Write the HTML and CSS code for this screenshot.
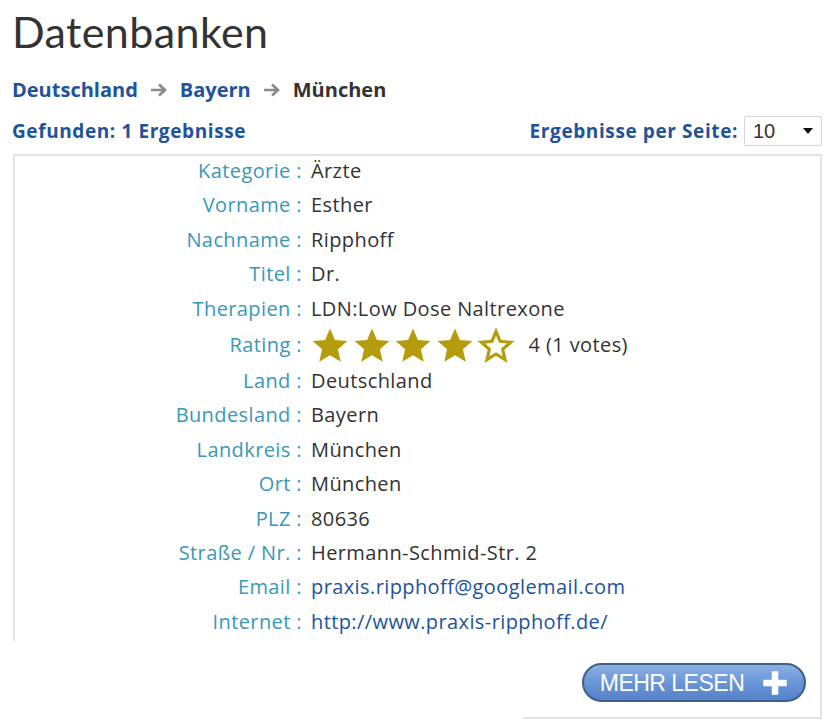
FILE: index.html
```html
<!DOCTYPE html>
<html lang="de">
<head>
<meta charset="utf-8">
<title>Datenbanken</title>
<link rel="stylesheet" href="styles.css">
</head>
<body>
<div class="page">
  <h1 class="title">Datenbanken</h1>
  <div class="crumbs">
    <a class="crumb" href="#">Deutschland</a>
    <svg class="arrow" viewBox="0 0 20 16"><path d="M2 8h14M10 2.5L16 8l-6 5.5"/></svg>
    <a class="crumb" href="#">Bayern</a>
    <svg class="arrow" viewBox="0 0 20 16"><path d="M2 8h14M10 2.5L16 8l-6 5.5"/></svg>
    <span class="crumb current">München</span>
  </div>
  <div class="toolbar">
    <span class="found">Gefunden: 1 Ergebnisse</span>
    <div class="perpage">
      <span>Ergebnisse per Seite:</span>
      <div class="select"><span>10</span><span class="caret"></span></div>
    </div>
  </div>
  <div class="box">
    <div class="rows">
      <div class="lbl">Kategorie :</div><div class="val">Ärzte</div>
      <div class="lbl">Vorname :</div><div class="val">Esther</div>
      <div class="lbl">Nachname :</div><div class="val">Ripphoff</div>
      <div class="lbl">Titel :</div><div class="val">Dr.</div>
      <div class="lbl">Therapien :</div><div class="val">LDN:Low Dose Naltrexone</div>
      <div class="lbl rating-lbl">Rating :</div>
      <div class="val rating">
        <svg class="star" viewBox="0 0 24 24"><path d="M12 1.5l3.1 7.3 7.9.7-6 5.2 1.8 7.8L12 18.4l-6.8 4.1L7 14.7 1 9.5l7.9-.7z"/></svg>
        <svg class="star" viewBox="0 0 24 24"><path d="M12 1.5l3.1 7.3 7.9.7-6 5.2 1.8 7.8L12 18.4l-6.8 4.1L7 14.7 1 9.5l7.9-.7z"/></svg>
        <svg class="star" viewBox="0 0 24 24"><path d="M12 1.5l3.1 7.3 7.9.7-6 5.2 1.8 7.8L12 18.4l-6.8 4.1L7 14.7 1 9.5l7.9-.7z"/></svg>
        <svg class="star" viewBox="0 0 24 24"><path d="M12 1.5l3.1 7.3 7.9.7-6 5.2 1.8 7.8L12 18.4l-6.8 4.1L7 14.7 1 9.5l7.9-.7z"/></svg>
        <svg class="star empty" viewBox="0 0 24 24"><path d="M12 3.5l2.6 6.2 6.6.6-5 4.4 1.5 6.5L12 17.7l-5.7 3.5 1.5-6.5-5-4.4 6.6-.6z"/></svg>
        <span class="votes">4 (1 votes)</span>
      </div>
      <div class="lbl">Land :</div><div class="val">Deutschland</div>
      <div class="lbl">Bundesland :</div><div class="val">Bayern</div>
      <div class="lbl">Landkreis :</div><div class="val">München</div>
      <div class="lbl">Ort :</div><div class="val">München</div>
      <div class="lbl">PLZ :</div><div class="val">80636</div>
      <div class="lbl">Straße / Nr. :</div><div class="val">Hermann-Schmid-Str. 2</div>
      <div class="lbl">Email :</div><div class="val"><a class="link" href="#">praxis.ripphoff@googlemail.com</a></div>
      <div class="lbl">Internet :</div><div class="val"><a class="link" href="#">http://www.praxis-ripphoff.de/</a></div>
    </div>
  </div>
  <div class="foot">
    <a class="more" href="#">MEHR LESEN
      <svg class="plus" viewBox="0 0 20 20"><path d="M7.5 1h5v6.5H19v5h-6.5V19h-5v-6.5H1v-5h6.5z"/></svg>
    </a>
  </div>
</div>
</body>
</html>
```

FILE: styles.css
```css
html, body {
  margin: 0;
  padding: 0;
  background: #fff;
}
body {
  font-family: "Open Sans", "Liberation Sans", sans-serif;
  color: #333;
}
.page {
  width: 827px;
  padding: 0 5px 0 12px;
  box-sizing: border-box;
}
.title {
  margin: 0;
  padding-top: 6px;
  font-family: "Lato", "Open Sans", sans-serif;
  font-weight: 400;
  font-size: 43px;
  line-height: 52px;
  color: #333;
  letter-spacing: 0.4px;
}
.crumbs {
  margin-top: 19px;
  display: flex;
  align-items: center;
  gap: 11px;
  font-size: 20px;
  font-weight: 700;
  line-height: 26px;
}
.crumb {
  color: #21539a;
  text-decoration: none;
}
.crumb.current {
  color: #333;
}
.arrow {
  width: 20px;
  height: 16px;
  fill: none;
  stroke: #8a8a8a;
  stroke-width: 2.6;
}
.toolbar {
  margin-top: 13px;
  display: flex;
  justify-content: space-between;
  align-items: center;
  font-size: 19px;
  font-weight: 700;
  letter-spacing: 0.6px;
  color: #21539a;
}
.perpage {
  display: flex;
  align-items: center;
  gap: 6px;
}
.select {
  width: 78px;
  height: 30px;
  box-sizing: border-box;
  border: 1px solid #d6d6d6;
  border-radius: 2px;
  display: flex;
  align-items: center;
  justify-content: space-between;
  padding: 0 8px 0 8px;
  font-family: "Liberation Sans", sans-serif;
  font-weight: 400;
  font-size: 20px;
  letter-spacing: 0;
  color: #333;
}
.caret {
  width: 0;
  height: 0;
  border-left: 5px solid transparent;
  border-right: 5px solid transparent;
  border-top: 6px solid #111;
}
.box {
  margin-top: 8px;
  margin-left: 1px;
  border: 2px solid #e3e3e3;
  border-bottom: none;
  height: 487px;
  box-sizing: border-box;
}
.rows {
  display: grid;
  grid-template-columns: 287px 1fr;
  column-gap: 9px;
  margin-top: -2px;
}
.lbl {
  text-align: right;
  color: #3a98b6;
  font-size: 20px;
  letter-spacing: 0.4px;
  line-height: 34.4px;
  white-space: nowrap;
}
.val {
  color: #333;
  font-size: 20px;
  letter-spacing: 0.4px;
  line-height: 34.4px;
  white-space: nowrap;
}
.rating-lbl, .rating {
  line-height: 38px;
  height: 38px;
}
.rating {
  display: flex;
  align-items: center;
}
.star {
  width: 38px;
  height: 38px;
  margin-right: 3.5px;
  fill: #b59c0c;
  flex: none;
}
.star.empty {
  fill: #fff;
  stroke: #b59c0c;
  stroke-width: 2;
  stroke-linejoin: miter;
}
.votes {
  margin-left: 10px;
}
.link {
  color: #21539a;
  text-decoration: none;
}
.foot {
  margin-left: 511px;
  border-right: 2px solid #e3e3e3;
  border-bottom: 2px solid #e3e3e3;
  height: 78px;
  box-sizing: border-box;
  display: flex;
  justify-content: flex-end;
  align-items: flex-start;
  padding-top: 22px;
  padding-right: 14px;
}
.more {
  width: 224px;
  height: 39px;
  box-sizing: border-box;
  border: 2px solid #3f5f8e;
  border-radius: 20px;
  background: linear-gradient(#8cb0e4, #6a95d6 50%, #5582c9);
  color: #fff;
  text-decoration: none;
  display: flex;
  align-items: center;
  justify-content: center;
  gap: 18px;
  font-family: "Liberation Sans", sans-serif;
  font-size: 23px;
  letter-spacing: -0.5px;
  padding-top: 1px;
}
.plus {
  width: 26px;
  height: 26px;
  fill: #fff;
}
```
